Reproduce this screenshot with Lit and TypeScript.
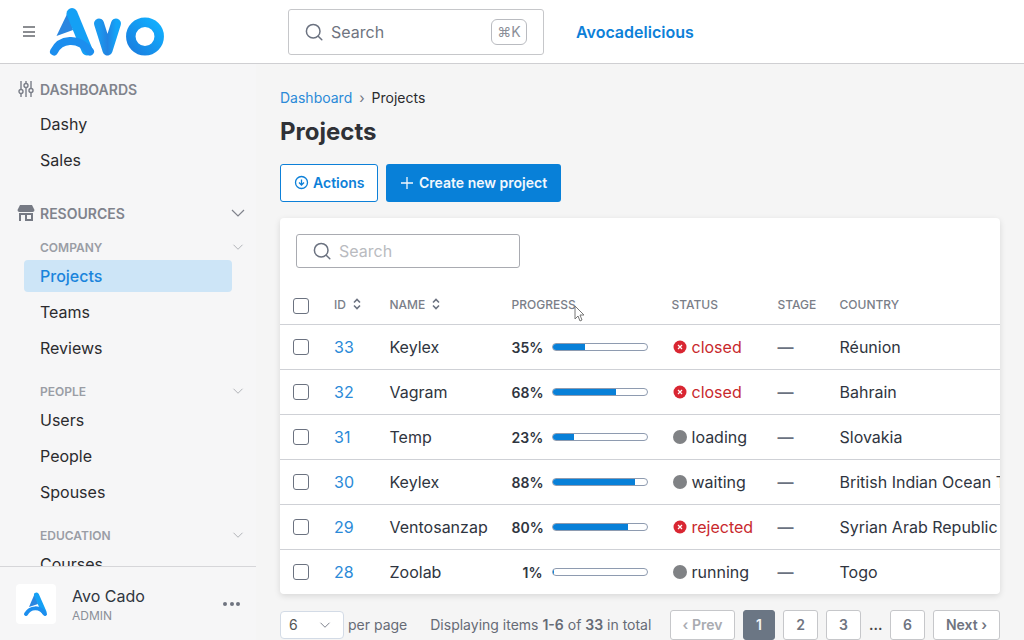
import { LitElement, html, css, svg } from "lit";
import { customElement } from "lit/decorators.js";

const rows = [
  { id: 33, name: "Keylex", pct: 35, status: "closed", country: "Réunion" },
  { id: 32, name: "Vagram", pct: 68, status: "closed", country: "Bahrain" },
  { id: 31, name: "Temp", pct: 23, status: "loading", country: "Slovakia" },
  { id: 30, name: "Keylex", pct: 88, status: "waiting", country: "British Indian Ocean Territory" },
  { id: 29, name: "Ventosanzap", pct: 80, status: "rejected", country: "Syrian Arab Republic" },
  { id: 28, name: "Zoolab", pct: 1, status: "running", country: "Togo" },
];

const groups = [
  { title: "COMPANY", items: ["Projects", "Teams", "Reviews"] },
  { title: "PEOPLE", items: ["Users", "People", "Spouses"] },
  { title: "EDUCATION", items: ["Courses"] },
];

const chevron = (size: number) => html`<svg width=${size} height=${size} viewBox="0 0 16 16" fill="none" stroke="currentColor" stroke-width="1.2"><path d="M2 5l6 6 6-6" /></svg>`;
const searchIcon = html`<svg width="20" height="20" viewBox="0 0 20 20" fill="none" stroke="#6b7280" stroke-width="1.5"><circle cx="9.2" cy="9.2" r="6.8" /><path d="M14.2 14.2l3.6 3.6" stroke-linecap="round" /></svg>`;
const sortIcon = html`<svg width="8" height="12" viewBox="0 0 8 12" fill="none" stroke="#6b7280" stroke-width="1.6"><path d="M1 4.5L4 1.5l3 3M1 7.5l3 3 3-3" /></svg>`;

const logoDefs = svg`<defs>
  <linearGradient id="lg" x1="0" y1="1" x2="1" y2="0"><stop offset="0" stop-color="#1a7fe0" /><stop offset="1" stop-color="#10b0ff" /></linearGradient>
  <linearGradient id="lv" x1="0" y1="0" x2="1" y2="0"><stop offset="0" stop-color="#1a9af0" /><stop offset="0.5" stop-color="#2382e0" /><stop offset="1" stop-color="#12a4f8" /></linearGradient>
</defs>`;
const logoA = svg`
  <path d="M20 7 L8.5 31 L25 25 Z" fill="#2a86e0" />
  <path d="M24 8.5 L39 45" stroke="#14a0f5" stroke-width="11" stroke-linecap="round" fill="none" />
  <path d="M6 46.5 C12 34 30 31 42 46.5" stroke="#1c8eee" stroke-width="8" stroke-linecap="round" fill="none" />`;

@customElement("app-root")
export class AppRoot extends LitElement {
  static styles = css`
    :host {
      display: block;
      width: 1024px;
      height: 640px;
      overflow: hidden;
      position: relative;
      font-family: Inter, "Liberation Sans", sans-serif;
      font-size: 16px;
      color: #2f3540;
      background: #f5f5f5;
    }
    header {
      height: 63px;
      background: #fff;
      border-bottom: 1px solid #cfcfd2;
      display: flex;
      align-items: center;
    }
    .burger {
      width: 12px;
      margin: 0 13px 0 23px;
      display: flex;
      flex-direction: column;
      gap: 2.5px;
    }
    .burger i {
      height: 2px;
      background: #8b8d91;
    }
    .logo {
      display: block;
      width: 120px;
      height: 54px;
      flex: none;
    }
    .top-search {
      margin-left: 120px;
      width: 256px;
      height: 46px;
      box-sizing: border-box;
      border: 1px solid #c6c7ca;
      border-radius: 3px;
      display: flex;
      align-items: center;
      padding: 0 16px 0 15px;
      gap: 7px;
      color: #6f7480;
    }
    .top-search span {
      flex: 1;
    }
    .kbd {
      width: 36px;
      height: 26px;
      box-sizing: border-box;
      border: 1px solid #b9bbc0;
      border-radius: 6px;
      font-size: 14px;
      color: #8b8f98;
      display: flex;
      align-items: center;
      justify-content: center;
    }
    .brand {
      margin-left: 32px;
      font-weight: 600;
      color: #0d80d8;
    }
    .body {
      display: flex;
      height: 576px;
    }
    aside {
      width: 256px;
      flex: none;
      display: flex;
      flex-direction: column;
      background: #f6f6f7;
    }
    nav {
      height: 502px;
      overflow: hidden;
      padding-top: 10px;
      box-sizing: border-box;
    }
    .section {
      height: 32px;
      box-sizing: border-box;
      padding-bottom: 2px;
      display: flex;
      align-items: center;
      gap: 6px;
      padding-left: 18px;
      font-size: 14px;
      font-weight: 600;
      color: #80838c;
    }
    .section svg:first-child {
      width: 16px;
      height: 18px;
      flex: none;
    }
    .section.res {
      margin-top: 20px;
      padding-right: 10px;
      margin-bottom: 6px;
    }
    .section.res .grow {
      flex: 1;
    }
    .sub {
      height: 22px;
      display: flex;
      align-items: center;
      justify-content: space-between;
      padding: 0 12px 0 40px;
      font-size: 12px;
      font-weight: 600;
      color: #9a9da5;
      margin-top: 14px;
    }
    .sub.first {
      margin-top: 0;
    }
    .sub svg {
      color: #a9abb1;
    }
    .item {
      height: 36px;
      display: flex;
      align-items: center;
      padding-left: 40px;
      color: #2b2b2e;
    }
    .item.active {
      height: 32px;
      margin: 2px 24px;
      padding-left: 16px;
      background: #cde5f7;
      border-radius: 4px;
      color: #1a84dc;
      font-weight: 500;
    }
    .user {
      flex: 1;
      border-top: 1px solid #d6d6d9;
      display: flex;
      align-items: center;
      padding: 0 16px;
      gap: 16px;
    }
    .avatar {
      width: 40px;
      height: 40px;
      background: #fff;
      border-radius: 4px;
      flex: none;
    }
    .who {
      flex: 1;
      line-height: 20px;
      padding-top: 5px;
    }
    .who small {
      display: block;
      font-size: 12px;
      color: #8b8f98;
      line-height: 20px;
    }
    .dots {
      display: flex;
      gap: 2.5px;
    }
    .dots i {
      width: 4px;
      height: 4px;
      border-radius: 50%;
      background: #6f7480;
    }
    main {
      flex: 1;
      padding: 23px 24px 0;
      min-width: 0;
    }
    .crumbs {
      height: 20px;
      display: flex;
      align-items: center;
      font-size: 14px;
      gap: 7px;
      color: #2b2b2e;
    }
    .crumbs a {
      color: #2b8ad8;
    }
    .crumbs b {
      font-weight: 400;
      color: #6f7480;
    }
    h1 {
      margin: 9px 0 0;
      font-size: 24px;
      line-height: 32px;
      font-weight: 700;
      color: #2f3136;
    }
    .actions {
      display: flex;
      gap: 8px;
      margin-top: 16px;
    }
    .btn {
      height: 38px;
      box-sizing: border-box;
      display: flex;
      align-items: center;
      gap: 5px;
      font-size: 14px;
      font-weight: 600;
      border-radius: 3px;
      padding: 0 14px 1px;
      white-space: nowrap;
    }
    .btn svg {
      flex: none;
    }
    .btn.outline {
      background: #fff;
      color: #0d80d8;
      border: 1px solid #0d80d8;
      width: 98px;
      padding-left: 13px;
      padding-right: 0;
      gap: 4px;
    }
    .btn.solid {
      background: #0880d8;
      color: #f2f8fd;
      width: 175px;
    }
    .card {
      margin-top: 16px;
      height: 376px;
      width: 720px;
      background: #fff;
      border-radius: 4px;
      box-shadow: 0 2px 6px rgba(0, 0, 0, 0.12);
      overflow: hidden;
    }
    .tools {
      padding: 16px;
      height: 34px;
    }
    .tools div {
      width: 224px;
      height: 34px;
      box-sizing: border-box;
      border: 1px solid #a9abb1;
      border-radius: 3px;
      display: flex;
      align-items: center;
      padding-left: 15px;
      gap: 7px;
      color: #b9bbc0;
    }
    .row {
      display: grid;
      grid-template-columns: 54px 55.5px 122px 160px 106px 62px 300px;
      align-items: center;
      height: 44px;
      border-bottom: 1px solid #cfd1d6;
      white-space: nowrap;
    }
    .row.head {
      height: 40px;
      font-size: 12px;
      font-weight: 500;
      color: #7a7e88;
    }
    .row.head .check {
      margin-top: 4px;
    }
    .row > :first-child {
      padding-left: 13px;
    }
    .check {
      display: block;
      width: 16px;
      height: 16px;
      box-sizing: border-box;
      border: 1px solid #6b7280;
      border-radius: 3px;
    }
    .sortable {
      display: flex;
      align-items: center;
      gap: 7px;
    }
    .id {
      color: #2b8ad8;
    }
    .progress {
      display: flex;
      align-items: center;
      gap: 9px;
    }
    .pct {
      width: 31px;
      text-align: right;
      font-size: 14px;
      font-weight: 600;
    }
    .bar {
      width: 96px;
      height: 8px;
      box-sizing: border-box;
      border: 1px solid #8e9bb0;
      border-radius: 4px;
      overflow: hidden;
    }
    .bar i {
      display: block;
      height: 100%;
      background: #0880d8;
    }
    .status {
      display: flex;
      align-items: center;
      gap: 5px;
      padding-left: 1px;
    }
    .status.bad {
      color: #c8282d;
    }
    .dash {
      color: #6b7280;
      font-weight: 600;
    }
    .pager {
      height: 30px;
      margin-top: 16px;
      display: flex;
      align-items: center;
      font-size: 14px;
      line-height: 16px;
      color: #666b75;
    }
    .select {
      width: 64px;
      height: 28px;
      box-sizing: border-box;
      border: 1px solid #d3dbe6;
      border-radius: 4px;
      background: #fff;
      display: flex;
      align-items: center;
      justify-content: space-between;
      padding: 0 12px 0 8px;
      margin-right: 4px;
      color: #555;
    }
    .select svg {
      color: #6f7480;
    }
    .count {
      margin-left: 23px;
    }
    .count b {
      font-weight: 600;
    }
    .pages {
      margin-left: auto;
      display: flex;
      align-items: center;
      gap: 8px;
    }
    .pages span {
      height: 30px;
      box-sizing: border-box;
      border: 1px solid #c6c7ca;
      border-radius: 3px;
      background: #fff;
      display: flex;
      align-items: center;
      justify-content: center;
      font-weight: 600;
      color: #6f7480;
    }
    .pages span.off {
      color: #a9abb1;
    }
    .pages span.on {
      background: #6b7684;
      border-color: #6b7684;
      color: #f2f3f5;
    }
    .pages em {
      font-style: normal;
      width: 13px;
      text-align: center;
      font-size: 14px;
      font-weight: 600;
      color: #444;
    }
    .cursor {
      position: absolute;
      left: 574px;
      top: 305px;
    }
  `;

  private statusIcon(bad: boolean) {
    return bad
      ? html`<svg width="14" height="14" viewBox="0 0 14 14"><circle cx="7" cy="7" r="6.5" fill="#d92632" /><path d="M5 5l4 4M9 5l-4 4" stroke="#fff" stroke-width="1.2" /></svg>`
      : html`<svg width="14" height="14" viewBox="0 0 14 14"><circle cx="7" cy="7" r="7" fill="#808285" /></svg>`;
  }

  protected render() {
    return html`
      <header>
        <div class="burger"><i></i><i></i><i></i></div>
        <svg class="logo" viewBox="0 0 120 54">
          ${logoDefs} ${logoA}
          <path d="M51 18.5 L59.5 45.5 L68 18.5" stroke="url(#lv)" stroke-width="10" stroke-linecap="round" stroke-linejoin="round" fill="none" />
          <circle cx="97" cy="31.5" r="14.2" stroke="url(#lg)" stroke-width="9.5" fill="none" />
        </svg>
        <div class="top-search">${searchIcon}<span>Search</span><div class="kbd">⌘K</div></div>
        <div class="brand">Avocadelicious</div>
      </header>
      <div class="body">
        <aside>
          <nav>
            <div class="section">
              <svg viewBox="0 0 16 18" fill="none" stroke="#7a7e88" stroke-width="1.4"><path d="M3 1v8M3 14v3M8 1v2M8 8v9M13 1v7M13 13v4" /><circle cx="3" cy="11.5" r="2" /><circle cx="8" cy="5.5" r="2" /><circle cx="13" cy="10.5" r="2" /></svg>
              DASHBOARDS
            </div>
            <div class="item">Dashy</div>
            <div class="item">Sales</div>
            <div class="section res">
              <svg viewBox="0 0 18 18" fill="#767a84" style="width:18px;margin-left:-1px;margin-right:-1px"><path d="M3 1h12l2.5 5a2 2 0 0 1-2 2h-13a2 2 0 0 1-2-2z" /><path fill-rule="evenodd" d="M2 9h14v8H2zM4 11v6h4v-6zM10 11v4h4v-4z" /></svg>
              <span class="grow">RESOURCES</span>
              ${chevron(16)}
            </div>
            ${groups.map(
              (g, i) => html`
                <div class="sub ${i === 0 ? "first" : ""}">${g.title}${chevron(12)}</div>
                ${g.items.map((it) => html`<div class="item ${it === "Projects" ? "active" : ""}">${it}</div>`)}
              `
            )}
          </nav>
          <div class="user">
            <div class="avatar">
              <svg width="40" height="40" viewBox="0 0 40 40">
                <path d="M19 9L13 23 22 20z" fill="#2a86e0" />
                <path d="M20.5 11L28 28" stroke="#14a0f5" stroke-width="5" stroke-linecap="round" fill="none" />
                <path d="M10 30C14 23 24 22 29 30" stroke="#1c8eee" stroke-width="4" stroke-linecap="round" fill="none" />
              </svg>
            </div>
            <div class="who">Avo Cado<small>ADMIN</small></div>
            <div class="dots"><i></i><i></i><i></i></div>
          </div>
        </aside>
        <main>
          <div class="crumbs"><a>Dashboard</a><b>›</b><span>Projects</span></div>
          <h1>Projects</h1>
          <div class="actions">
            <div class="btn outline">
              <svg width="15" height="15" viewBox="0 0 15 15" fill="none" stroke="currentColor" stroke-width="1.3"><circle cx="7.5" cy="7.5" r="6" /><path d="M7.5 4.5v5M5 7.5l2.5 2.5L10 7.5" /></svg>
              Actions
            </div>
            <div class="btn solid">
              <svg width="14" height="14" viewBox="0 0 14 14" fill="none" stroke="currentColor" stroke-width="1.3"><path d="M7 1v12M1 7h12" /></svg>
              Create new project
            </div>
          </div>
          <div class="card">
            <div class="tools"><div>${searchIcon}Search</div></div>
            <div class="row head">
              <div><i class="check"></i></div>
              <div class="sortable">ID ${sortIcon}</div>
              <div class="sortable">NAME ${sortIcon}</div>
              <div>PROGRESS</div>
              <div>STATUS</div>
              <div>STAGE</div>
              <div>COUNTRY</div>
            </div>
            ${rows.map((r) => {
              const bad = r.status === "closed" || r.status === "rejected";
              return html`
                <div class="row">
                  <div><i class="check"></i></div>
                  <div class="id">${r.id}</div>
                  <div>${r.name}</div>
                  <div class="progress">
                    <span class="pct">${r.pct}%</span>
                    <div class="bar"><i style="width: ${r.pct}%"></i></div>
                  </div>
                  <div class="status ${bad ? "bad" : ""}">${this.statusIcon(bad)}${r.status}</div>
                  <div class="dash">—</div>
                  <div>${r.country}</div>
                </div>
              `;
            })}
          </div>
          <div class="pager">
            <div class="select">6 ${chevron(12)}</div>
            per page
            <div class="count">Displaying items <b>1-6</b> of <b>33</b> in total</div>
            <div class="pages">
              <span class="off" style="width: 65px">‹ Prev</span>
              <span class="on" style="width: 32px">1</span>
              <span style="width: 35px">2</span>
              <span style="width: 35px">3</span>
              <em>...</em>
              <span style="width: 35px">6</span>
              <span style="width: 67px">Next ›</span>
            </div>
          </div>
        </main>
      </div>
      <svg class="cursor" width="12" height="18" viewBox="0 0 12 18"><path d="M1 1v13l3-3 2 5 2-1-2-5h4z" fill="#fff" stroke="#777" stroke-width="1" /></svg>
    `;
  }
}
